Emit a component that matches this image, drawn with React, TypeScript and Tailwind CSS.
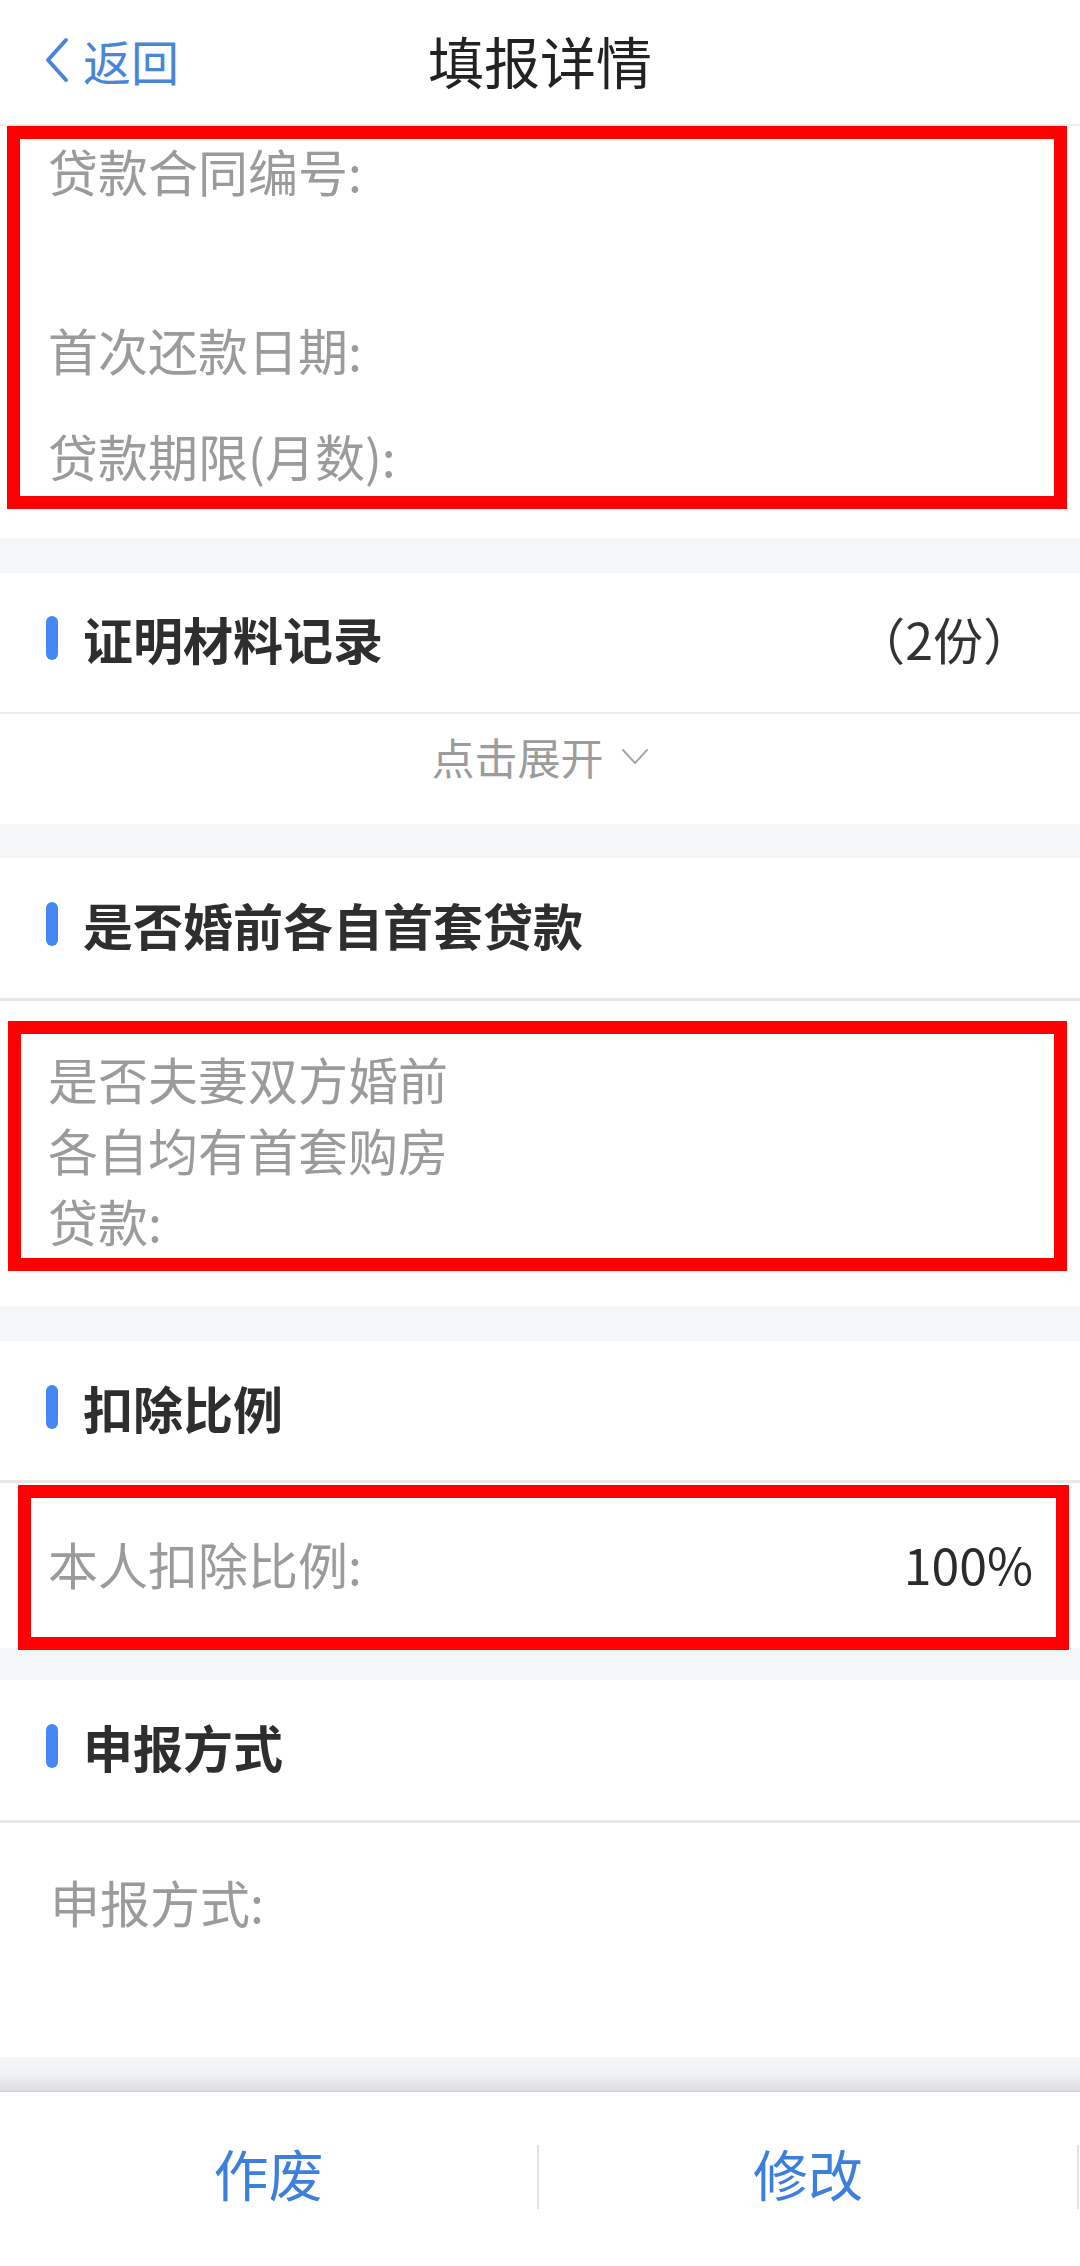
import React from "react";

function SectionHeader({ title, right }: { title: string; right?: string }) {
  return (
    <div className="h-[143px] flex items-center pb-[8px] border-b-[3px] border-[#e8e8e8] bg-white">
      <div className="ml-[46px] w-[12px] h-[44px] rounded-full bg-[#4588f5]" />
      <div className="ml-[25px] text-[50px] leading-[50px] font-bold text-[#2e2e2e]">{title}</div>
      {right ? (
        <div className="ml-auto mr-[47px] text-[50px] leading-[50px] text-[#333333]">{right}</div>
      ) : null}
    </div>
  );
}

function Band({ h }: { h: string }) {
  return <div className={`${h} bg-[#f5f6f8]`} />;
}

export default function App() {
  return (
    <div className="w-[1080px] min-h-[2266px] bg-white flex flex-col font-['Noto_Sans_CJK_SC','Noto_Sans',sans-serif]">
      {/* Nav */}
      <div className="h-[126px] grid grid-cols-[1fr_auto_1fr] items-center pb-[4px] border-b-2 border-[#eeeeee] bg-white">
        <div className="flex items-center pl-[44px] gap-[13px] text-[48px] leading-[48px] text-[#4a86d8]">
          <svg width="26" height="46" viewBox="0 0 26 46" fill="none">
            <polyline points="22,3 4,23 22,43" stroke="#4a86d8" strokeWidth="4" strokeLinecap="round" strokeLinejoin="round" />
          </svg>
          <span>返回</span>
        </div>
        <div className="text-[56px] leading-[56px] text-[#222222]">填报详情</div>
        <div />
      </div>

      {/* Section A */}
      <section className="relative bg-white pt-[19px] pb-[30px]">
        <div className="pl-[48px] mb-[101px] text-[50px] leading-[50px] text-[#9b9b9b]">贷款合同编号:</div>
        <div className="pl-[48px] py-[28px] text-[50px] leading-[50px] text-[#9b9b9b]">首次还款日期:</div>
        <div className="pl-[48px] py-[28px] text-[50px] leading-[50px] text-[#9b9b9b]">贷款期限(月数):</div>
        <div className="absolute left-[7px] right-[13px] top-0 h-[383px] border-[13px] border-[#ff0000] pointer-events-none" />
      </section>

      <Band h="h-[35px]" />

      {/* Section B */}
      <div className="h-[141px] flex items-center pb-[9px] border-b-2 border-[#ececec] bg-white">
        <div className="ml-[46px] w-[12px] h-[44px] rounded-full bg-[#4588f5]" />
        <div className="ml-[25px] text-[50px] leading-[50px] font-bold text-[#2e2e2e]">证明材料记录</div>
        <div className="ml-auto mr-[47px] text-[50px] leading-[50px] text-[#333333]">（2份）</div>
      </div>
      <div className="h-[110px] flex justify-center items-start pt-[21px] bg-white">
        <div className="flex items-center gap-[17px]">
          <span className="text-[43px] leading-[43px] text-[#9c9c9c]">点击展开</span>
          <svg width="28" height="18" viewBox="0 0 28 18" fill="none">
            <polyline points="2,2 14,15 26,2" stroke="#a8a8a8" strokeWidth="2" strokeLinecap="round" strokeLinejoin="round" />
          </svg>
        </div>
      </div>

      <Band h="h-[34px]" />

      {/* Section C */}
      <SectionHeader title="是否婚前各自首套贷款" />
      <section className="relative h-[305px] bg-white pt-[42px]">
        <div className="pl-[48px] w-[458px] text-[50px] leading-[71px] text-[#9b9b9b]">
          是否夫妻双方婚前各自均有首套购房贷款:
        </div>
        <div className="absolute left-[8px] right-[13px] top-[20px] h-[250px] border-[13px] border-[#ff0000] pointer-events-none" />
      </section>

      <Band h="h-[35px]" />

      {/* Section D */}
      <div className="h-[142px] flex items-center pb-[8px] border-b-[3px] border-[#e8e8e8] bg-white">
        <div className="ml-[46px] w-[12px] h-[44px] rounded-full bg-[#4588f5]" />
        <div className="ml-[25px] text-[50px] leading-[50px] font-bold text-[#2e2e2e]">扣除比例</div>
      </div>
      <section className="relative h-[165px] bg-white flex items-center justify-between pl-[48px] pr-[47px] pb-[6px]">
        <span className="text-[50px] leading-[50px] text-[#9b9b9b]">本人扣除比例:</span>
        <span className="text-[50px] leading-[50px] text-[#2b2b2b]">100%</span>
        <div className="absolute left-[18px] right-[11px] top-[2px] h-[165px] border-[13px] border-[#ff0000] pointer-events-none" />
      </section>

      <Band h="h-[32px]" />

      {/* Section E */}
      <SectionHeader title="申报方式" />
      <section className="h-[234px] bg-white pt-[53px] pl-[50px]">
        <span className="text-[50px] leading-[50px] text-[#9b9b9b]">申报方式:</span>
      </section>

      <div className="h-[35px] bg-linear-to-b from-[#f6f7f9] via-[#f0f1f3] to-[#dcdde0] border-b border-[#cfd0d3]" />

      {/* Bottom bar */}
      <div className="h-[174px] flex items-center bg-white">
        <div className="w-[537px] h-full flex items-center justify-center pb-[13px] text-[55px] leading-[55px] text-[#3d7fdc]">作废</div>
        <div className="w-[2px] h-[64px] bg-[#e2e2e2] mb-[4px]" />
        <div className="w-[538px] h-full flex items-center justify-center pb-[13px] text-[55px] leading-[55px] text-[#3d7fdc]">修改</div>
        <div className="w-[2px] h-[64px] bg-[#e2e2e2] mb-[4px]" />
      </div>
    </div>
  );
}
